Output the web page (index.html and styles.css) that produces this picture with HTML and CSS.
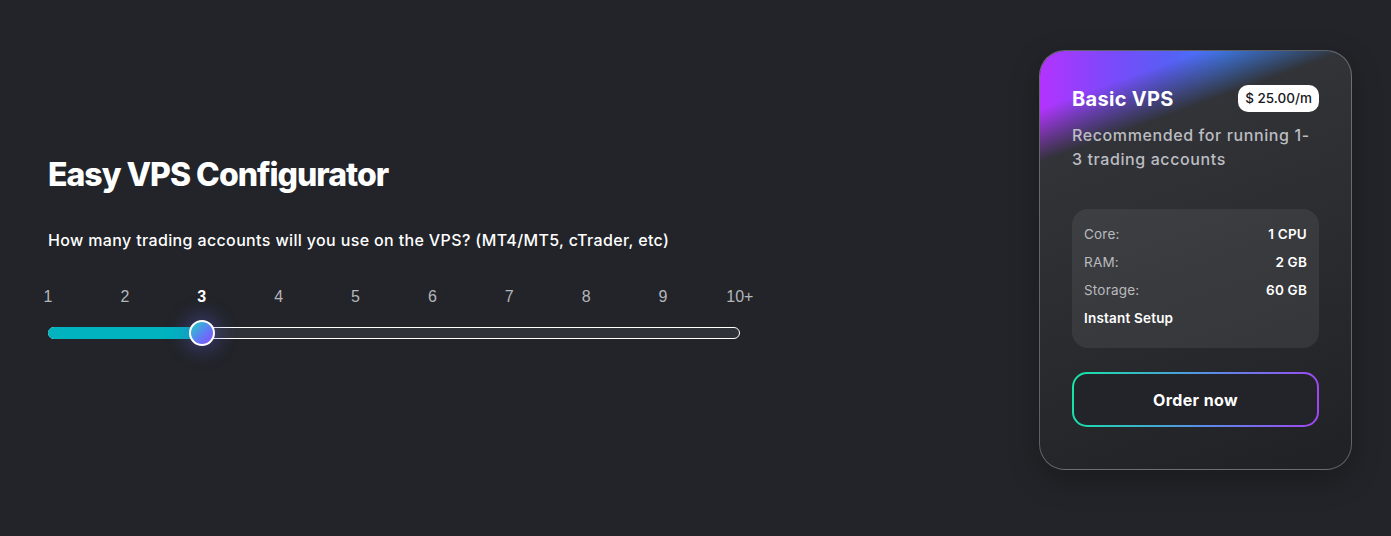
FILE: index.html
```html
<!DOCTYPE html>
<html lang="en">
<head>
    <meta charset="UTF-8">
    <meta name="viewport" content="width=device-width, initial-scale=1.0">
    <title>Easy VPS Configurator</title>
    <link rel="stylesheet" href="styles.css">
</head>
<body>
    <main class="page">
        <section class="configurator">
            <h1>Easy VPS Configurator</h1>
            <p class="question">How many trading accounts will you use on the VPS? (MT4/MT5, cTrader, etc)</p>
            <div class="slider">
                <div class="ticks">
                    <span class="tick"><span>1</span></span>
                    <span class="tick"><span>2</span></span>
                    <span class="tick active"><span>3</span></span>
                    <span class="tick"><span>4</span></span>
                    <span class="tick"><span>5</span></span>
                    <span class="tick"><span>6</span></span>
                    <span class="tick"><span>7</span></span>
                    <span class="tick"><span>8</span></span>
                    <span class="tick"><span>9</span></span>
                    <span class="tick"><span>10+</span></span>
                </div>
                <div class="track">
                    <div class="fill" style="width: 22.2%"></div>
                    <div class="thumb"></div>
                </div>
            </div>
        </section>

        <aside class="card">
            <div class="card-head">
                <h2>Basic VPS</h2>
                <span class="price">$ 25.00/m</span>
            </div>
            <p class="desc">Recommended for running 1-3 trading accounts</p>
            <div class="specs">
                <div class="row"><span>Core:</span><b>1 CPU</b></div>
                <div class="row"><span>RAM:</span><b>2 GB</b></div>
                <div class="row"><span>Storage:</span><b>60 GB</b></div>
                <div class="row"><b>Instant Setup</b></div>
            </div>
            <button class="order">Order now</button>
        </aside>
    </main>
</body>
</html>
```

FILE: styles.css
```css
body {
    margin: 0;
    background: #222429;
    color: #fff;
    font-family: Inter, "Open Sans", sans-serif;
}
.page {
    height: 536px;
    display: flex;
    align-items: center;
    justify-content: space-between;
    padding: 0 39px 16px 48px;
    box-sizing: border-box;
}
.configurator {
    width: 692px;
    margin-bottom: 26px;
}
.configurator h1 {
    margin: 0 0 34px;
    font-size: 32px;
    font-weight: 800;
    letter-spacing: -1px;
    line-height: 40px;
}
.question {
    margin: 0 0 37px;
    font-size: 16px;
    font-weight: 500;
    letter-spacing: 0.36px;
    line-height: 22px;
}
.ticks {
    display: flex;
    justify-content: space-between;
    font-family: "Liberation Sans", Arial, sans-serif;
    font-size: 16px;
    color: #b4b6ba;
    height: 20px;
}
.tick {
    width: 0;
    display: flex;
    justify-content: center;
    white-space: nowrap;
}
.tick.active {
    color: #fff;
    font-weight: bold;
}
.track {
    position: relative;
    margin-top: 19px;
    height: 12px;
    border: 1px solid #fff;
    border-radius: 7px;
    background: #2f3238;
    box-sizing: border-box;
}
.fill {
    height: 12px;
    margin: -1px 0 0 -1px;
    background: #00b3bf;
    border-radius: 7px 0 0 7px;
}
.thumb {
    position: absolute;
    left: 22.2%;
    top: 50%;
    width: 22px;
    height: 22px;
    transform: translate(-50%, -50%);
    border: 2px solid #fff;
    border-radius: 50%;
    background: linear-gradient(135deg, #1fd3c0, #5f7cf5 55%, #8a4cf8);
    box-shadow: 0 0 18px 6px rgba(88, 90, 210, 0.35);
}
.card {
    position: relative;
    overflow: hidden;
    width: 313px;
    box-sizing: border-box;
    padding: 34px 32px 42px;
    border: 1px solid rgba(255, 255, 255, 0.28);
    border-radius: 26px;
    background: linear-gradient(160deg, #36383d 0%, #2c2e32 45%, #1f2125 100%);
    box-shadow: 0 10px 30px rgba(0, 0, 0, 0.25);
}
/* colour glow in the top left corner */
.card::before {
    content: "";
    position: absolute;
    inset: 0;
    background: linear-gradient(90deg, #b433fe 0%, #7c49f9 22%, #5a5df6 40%, #3f7df7 60%, #3b84f6 80%);
    -webkit-mask-image: linear-gradient(160deg, #000 0%, #000 11%, transparent 21%);
    mask-image: linear-gradient(160deg, #000 0%, #000 11%, transparent 21%);
}
.card > * {
    position: relative;
}
.card-head {
    display: flex;
    justify-content: space-between;
    align-items: center;
}
.card h2 {
    margin: 0;
    font-size: 20px;
    font-weight: 700;
    letter-spacing: 0.3px;
}
.price {
    background: #fff;
    color: #16181c;
    font-size: 13.5px;
    font-weight: 500;
    padding: 4px 7px;
    border-radius: 10px;
    line-height: 19px;
}
.desc {
    margin: 11px 0 38px;
    font-size: 16px;
    letter-spacing: 0.6px;
    line-height: 24px;
    color: #bcbdc2;
    font-weight: 500;
}
.specs {
    padding: 11px 12px 16px;
    border-radius: 16px;
    background: rgba(255, 255, 255, 0.07);
}
.row {
    display: flex;
    justify-content: space-between;
    font-size: 13.5px;
    letter-spacing: 0.2px;
    line-height: 28px;
}
.row span {
    color: #b9babe;
}
.row b {
    font-weight: 600;
}
.order {
    display: block;
    width: 100%;
    height: 55px;
    margin-top: 24px;
    border: 2px solid transparent;
    border-radius: 15px;
    background:
        linear-gradient(#222429, #222429) padding-box,
        linear-gradient(100deg, #14e6a6, #5a8ce8 55%, #a244f2) border-box;
    color: #fff;
    font-family: inherit;
    font-size: 16px;
    font-weight: 700;
    letter-spacing: 0.4px;
}
```
